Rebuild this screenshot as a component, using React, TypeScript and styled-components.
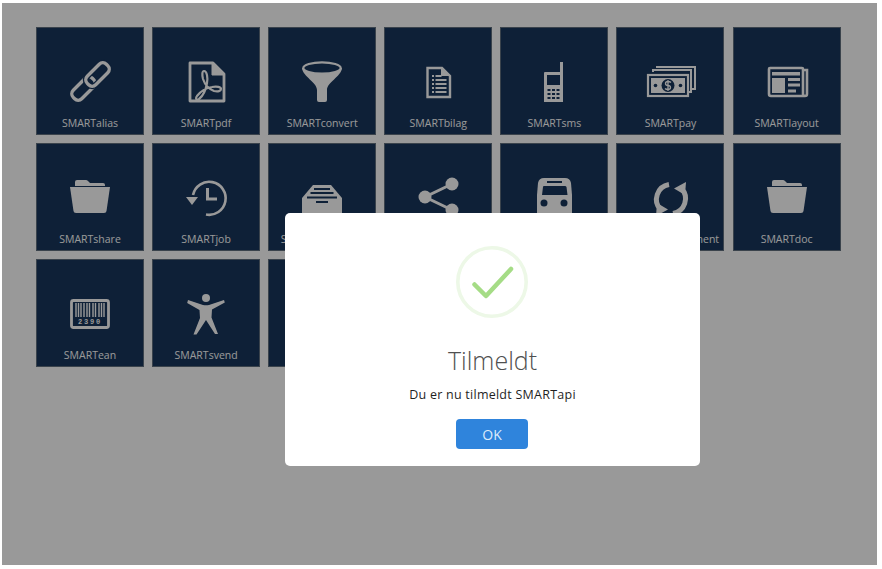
import React from 'react';
import styled, { createGlobalStyle } from 'styled-components';

const GlobalStyle = createGlobalStyle`
  html, body {
    margin: 0;
    padding: 0;
    background: #fff;
    font-family: "Open Sans", "Liberation Sans", sans-serif;
  }
`;

const Page = styled.div`
  width: 882px;
  height: 569px;
  overflow: hidden;
  box-sizing: border-box;
  padding: 27px 0 0 36px;
`;

const TileGrid = styled.div`
  display: grid;
  grid-template-columns: repeat(7, 108px);
  grid-auto-rows: 108px;
  column-gap: 8.1px;
  row-gap: 8px;
`;

const TileBox = styled.div`
  box-sizing: border-box;
  background: #18365c;
  border: 1px solid #62707f;
  color: #fff;
  display: flex;
  flex-direction: column;
  align-items: center;
  padding-top: 24px;
`;

const TileIcon = styled.svg`
  width: 60px;
  height: 60px;
  flex: none;
`;

const TileLabel = styled.span`
  margin-top: 1px;
  font-size: 10.5px;
  line-height: 20px;
  white-space: nowrap;
`;

const Backdrop = styled.div`
  position: fixed;
  left: 2px;
  top: 3px;
  width: 875px;
  height: 562px;
  background: rgba(0, 0, 0, 0.4);
`;

const Modal = styled.div`
  position: absolute;
  left: 283px;
  top: 210px;
  width: 415px;
  height: 253px;
  box-sizing: border-box;
  background: #fff;
  border-radius: 5px;
  padding-top: 33px;
  display: flex;
  flex-direction: column;
  align-items: center;
`;

const SuccessIcon = styled.svg`
  width: 72px;
  height: 72px;
  flex: none;
  margin-right: 1px;
`;

const Title = styled.h2`
  margin: 23px 0 0;
  font-size: 25px;
  line-height: 38px;
  font-weight: 300;
  color: #505050;
`;

const Message = styled.p`
  margin: 6px 0 0;
  font-size: 12.5px;
  line-height: 20px;
  color: #1f1f1f;
  letter-spacing: 0.25px;
`;

const OkButton = styled.button`
  margin: 14px 1px 0 0;
  width: 72px;
  height: 30px;
  border: 0;
  border-radius: 4px;
  background: #2f84dc;
  color: #dcebfa;
  font-family: inherit;
  font-size: 14px;
`;

const DARK = '#18365c';

const LinkGlyph = () => (
  <g fill="none" strokeWidth="3.4">
    <rect x="10" y="30.500" width="27" height="12" rx="5" transform="rotate(-45 23.500 36.500)" stroke="currentColor" />
    <rect x="24" y="16.500" width="27" height="12" rx="5" transform="rotate(-45 37.500 22.500)" stroke={DARK} strokeWidth="6" />
    <rect x="24" y="16.500" width="27" height="12" rx="5" transform="rotate(-45 37.500 22.500)" stroke="currentColor" />
  </g>
);

const PdfGlyph = () => (
  <g fill="none" stroke="currentColor">
    <path d="M14 11h23l11 11v27H14z" strokeWidth="2.800" strokeLinejoin="round" />
    <path d="M36 11v12h12z" fill="currentColor" strokeWidth="1" />
    <path
      d="M28 19c-2 0-2 4-1 8 2 6 6 10 11 12 4 1 7 0 7-2s-4-3-9-2c-6 1-12 5-15 9-2 3 0 5 2 3 4-3 7-10 8-16 1-5 0-12-3-12z"
      strokeWidth="2.200"
    />
  </g>
);

const FunnelGlyph = () => (
  <g>
    <path
      fill="currentColor"
      d="M10 16c1 9 15 14 15 22v10q0 2 2 2h6q2 0 2-2V38c0-8 14-13 15-22z"
    />
    <ellipse cx="30" cy="16" rx="18.700" ry="5.600" fill={DARK} stroke="currentColor" strokeWidth="2.200" />
  </g>
);

const BilagGlyph = () => (
  <g>
    <path d="M19.500 16h14.500l8 8v21H19.500z" fill="none" stroke="currentColor" strokeWidth="2.400" />
    <path d="M33 16v8h9z" fill="currentColor" />
    <path
      d="M24 24h2M27.500 24h6M24 28h2M27.500 28h11M24 32h2M27.500 32h11M24 36h2M27.500 36h11M24 40h2M27.500 40h11"
      stroke="currentColor"
      strokeWidth="2"
    />
  </g>
);

const PhoneGlyph = () => (
  <g>
    <path fill="currentColor" d="M36 10h3v40H20V21q0-1 1-1h15z" />
    <rect x="23" y="23" width="13" height="10" fill={DARK} />
    <path
      d="M23.500 38h3M28 38h3M32.500 38h3M23.500 42h3M28 42h3M32.500 42h3M23.500 46h3M28 46h3M32.500 46h3"
      stroke={DARK}
      strokeWidth="2"
    />
  </g>
);

const PayGlyph = () => (
  <g>
    <path d="M13 20v-2h38v22h-2M16 15h39v22h-3" fill="none" stroke="currentColor" strokeWidth="2" />
    <rect x="8" y="23" width="40" height="21" fill={DARK} stroke="currentColor" strokeWidth="2.200" />
    <rect x="11" y="26" width="34" height="15" fill="currentColor" />
    <circle cx="28" cy="33.500" r="6.500" fill={DARK} />
    <path d="M31 30.500q-1-1-3-1-2.500 0-2.500 2t2.500 2 2.500 2-2.500 2q-2 0-3-1M28 28v11" fill="none" stroke="currentColor" strokeWidth="1.300" />
    <circle cx="15.500" cy="33.500" r="1.800" fill={DARK} />
    <circle cx="40.500" cy="33.500" r="1.800" fill={DARK} />
  </g>
);

const LayoutGlyph = () => (
  <g>
    <path d="M46 18h4v24q0 2-2 2H14q-2 0-2-2V17q0-1 1-1h32q1 0 1 1v25q0 2 2 2" fill="none" stroke="currentColor" strokeWidth="2.600" />
    <rect x="15" y="20" width="28" height="3.500" fill="currentColor" />
    <rect x="15" y="26" width="13" height="15" fill="currentColor" />
    <path d="M31 27.500h12M31 33h12M31 39h8" stroke="currentColor" strokeWidth="2.800" />
  </g>
);

const FolderGlyph = () => (
  <g fill="currentColor">
    <path d="M15 15v-1q0-2 2-2h9q1 0 2 1l2 2h13q2 0 2 2v1H15z" />
    <path d="M10 19h40l-3.500 24q-.3 2-2.500 2H16q-2.200 0-2.500-2z" />
  </g>
);

const HistoryGlyph = () => (
  <g>
    <path d="M17 27A16.500 16.500 0 1 1 30 46.500" fill="none" stroke="currentColor" strokeWidth="2.600" />
    <path d="M10 29h12l-6 8z" fill="currentColor" />
    <path d="M31.500 20v11h9.500" fill="none" stroke="currentColor" strokeWidth="3" />
  </g>
);

const TrayGlyph = () => (
  <g>
    <path d="M21 17h18l11 13v15q0 2-2 2H12q-2 0-2-2V30z" fill="currentColor" />
    <path d="M22 21h16M18.500 25h23M15 29.500h30" stroke={DARK} strokeWidth="1.800" />
    <rect x="24" y="33" width="12" height="2" fill={DARK} />
  </g>
);

const ShareGlyph = () => (
  <g fill="currentColor">
    <path d="M44 16L17 29l27 13" fill="none" stroke="currentColor" strokeWidth="3" />
    <circle cx="44" cy="16" r="6.500" />
    <circle cx="17" cy="29" r="6.500" />
    <circle cx="44" cy="42" r="6.500" />
  </g>
);

const BusGlyph = () => (
  <g>
    <path d="M20 10h21q5 0 6 5l1 12v21H13V27l1-12q1-5 6-5z" fill="currentColor" />
    <rect x="23" y="13" width="15" height="2" fill={DARK} />
    <path d="M20 18h21q1 0 1.500 1l1 8H18l1-8q0-1 1-1z" fill={DARK} />
    <circle cx="20" cy="35" r="3.500" fill={DARK} />
    <circle cx="40" cy="35" r="3.500" fill={DARK} />
  </g>
);

const SyncGlyph = () => (
  <g>
    <path d="M29 16.500A15 15 0 0 0 20.500 41.500" fill="none" stroke="currentColor" strokeWidth="5" />
    <path d="M33 45.500A15 15 0 0 0 41.500 20.500" fill="none" stroke="currentColor" strokeWidth="5" />
    <path d="M34 20.500l12-6.500-1 13z" fill="currentColor" />
    <path d="M28 41.500l-12 6.500 1-13z" fill="currentColor" />
  </g>
);

const BarcodeGlyph = () => (
  <g>
    <rect x="11.500" y="16.500" width="37" height="27" rx="2" fill="none" stroke="currentColor" strokeWidth="2.800" />
    <path
      d="M16 19v14M18.500 19v14M21 19v14M24 19v14M27 19v14M29.500 19v14M33 19v14M35.500 19v14M39 19v14M41.500 19v14M44 19v14"
      stroke="currentColor"
      strokeWidth="1.400"
    />
    <text x="30" y="40" textAnchor="middle" fontSize="7" fontFamily="Liberation Mono, monospace" fontWeight="700" fill="currentColor" letterSpacing="1.800">
      2390
    </text>
  </g>
);

const PersonGlyph = () => (
  <g fill="currentColor">
    <circle cx="30" cy="14" r="4" />
    <path d="M12 16l15 5q3 .7 6 0l15-5 .8 2.500-12.800 7-.5 8 6.500 16.500h-3L30 36l-9.500 14.500h-3L24 34l-.5-8-12.300-7z" />
  </g>
);

const tiles: { label: string; glyph: React.ReactNode }[] = [
  { label: 'SMARTalias', glyph: <LinkGlyph /> },
  { label: 'SMARTpdf', glyph: <PdfGlyph /> },
  { label: 'SMARTconvert', glyph: <FunnelGlyph /> },
  { label: 'SMARTbilag', glyph: <BilagGlyph /> },
  { label: 'SMARTsms', glyph: <PhoneGlyph /> },
  { label: 'SMARTpay', glyph: <PayGlyph /> },
  { label: 'SMARTlayout', glyph: <LayoutGlyph /> },
  { label: 'SMARTshare', glyph: <FolderGlyph /> },
  { label: 'SMARTjob', glyph: <HistoryGlyph /> },
  { label: 'SMARTpostkasse', glyph: <TrayGlyph /> },
  { label: 'SMARTsocial', glyph: <ShareGlyph /> },
  { label: 'SMARTtrafik', glyph: <BusGlyph /> },
  { label: 'SMARTabonnement', glyph: <SyncGlyph /> },
  { label: 'SMARTdoc', glyph: <FolderGlyph /> },
  { label: 'SMARTean', glyph: <BarcodeGlyph /> },
  { label: 'SMARTsvend', glyph: <PersonGlyph /> },
  { label: 'SMARTapi', glyph: null },
];

const App = () => (
  <Page>
    <GlobalStyle />
    <TileGrid>
      {tiles.map((tile) => (
        <TileBox key={tile.label}>
          <TileIcon viewBox="0 0 60 60">{tile.glyph}</TileIcon>
          <TileLabel>{tile.label}</TileLabel>
        </TileBox>
      ))}
    </TileGrid>
    <Backdrop>
      <Modal>
        <SuccessIcon viewBox="0 0 72 72">
          <circle cx="36" cy="36" r="34.200" fill="none" stroke="#edf8e7" strokeWidth="3.600" />
          <path d="M18.500 38.500L30 50 55 23" fill="none" stroke="#a5dc86" strokeWidth="4.500" strokeLinecap="round" strokeLinejoin="round" />
        </SuccessIcon>
        <Title>Tilmeldt</Title>
        <Message>Du er nu tilmeldt SMARTapi</Message>
        <OkButton>OK</OkButton>
      </Modal>
    </Backdrop>
  </Page>
);

export default App;
